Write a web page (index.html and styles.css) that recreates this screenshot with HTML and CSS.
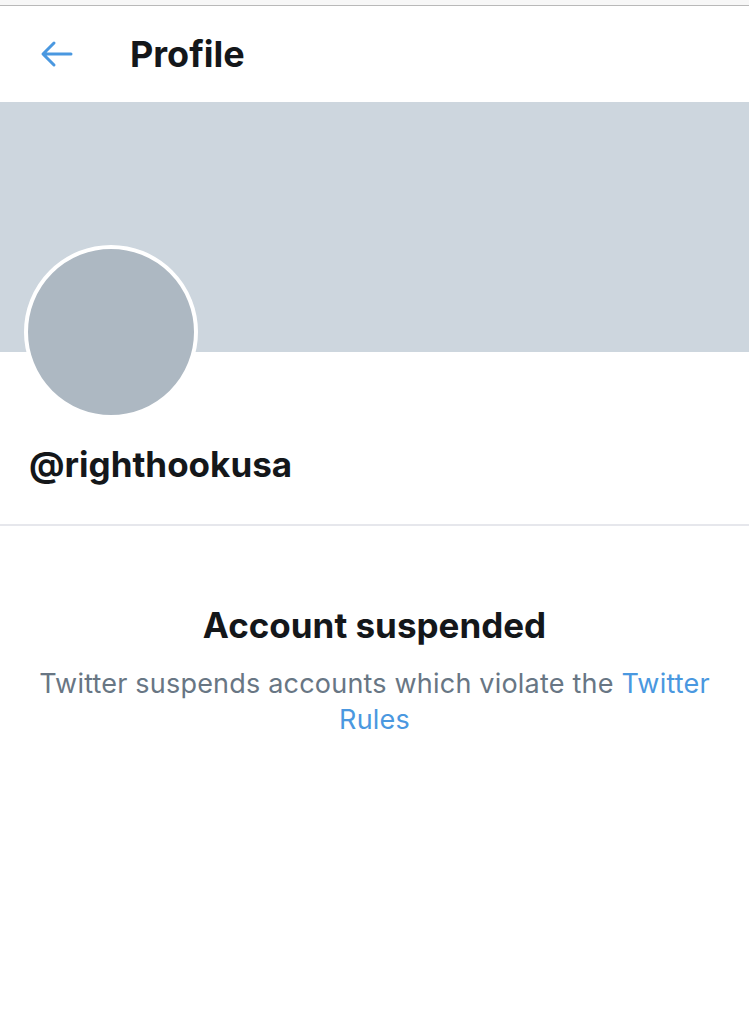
FILE: index.html
```html
<!DOCTYPE html>
<html>
<head>
<meta charset="utf-8">
<link rel="stylesheet" href="styles.css">
</head>
<body>
<div class="statusline"></div>
<header class="header">
  <svg class="back" width="34" height="28" viewBox="0 0 34 28">
    <path d="M31 14H4M14 3L3 14l11 11" fill="none" stroke="#4a98e0" stroke-width="3" stroke-linecap="round" stroke-linejoin="round"/>
  </svg>
  <h1 class="title">Profile</h1>
</header>
<div class="banner"></div>
<section class="profile">
  <div class="avatar"></div>
  <div class="handle">@righthookusa</div>
</section>
<section class="suspended">
  <h2 class="sus-title">Account suspended</h2>
  <p class="sus-text">Twitter suspends accounts which violate the <span class="link">Twitter Rules</span></p>
</section>
</body>
</html>
```

FILE: styles.css
```css
* { box-sizing: border-box; }
html, body { margin: 0; padding: 0; background: #fff; }
body { font-family: Inter, "Noto Sans", sans-serif; color: #14171a; width: 749px; }
.statusline { height: 6px; background: #f7f7f7; border-bottom: 1px solid #b9b9b9; }
.header { height: 96px; display: flex; align-items: center; padding-left: 40px; }
.back { display: block; margin-top: 0; }
.title { margin: 0 0 0 56px; font-size: 36px; font-weight: 700; line-height: 44px; }
.banner { height: 250px; background: #cdd6de; }
.profile { padding: 0 0 39px 24px; border-bottom: 2px solid #e6e7ec; }
.avatar { width: 174px; height: 174px; border-radius: 50%; background: #adb8c2; border: 4px solid #fff; margin-top: -107px; }
.handle { font-size: 35px; font-weight: 700; line-height: 42px; margin: 24px 0 0 5px; }
.suspended { text-align: center; padding: 77px 20px 0; }
.sus-title { margin: 0; font-size: 35px; font-weight: 700; line-height: 44px; }
.sus-text { margin: 19px 0 0; font-size: 27px; line-height: 36px; color: #687684; letter-spacing: 0.2px; }
.link { color: #4a98e0; }
```
